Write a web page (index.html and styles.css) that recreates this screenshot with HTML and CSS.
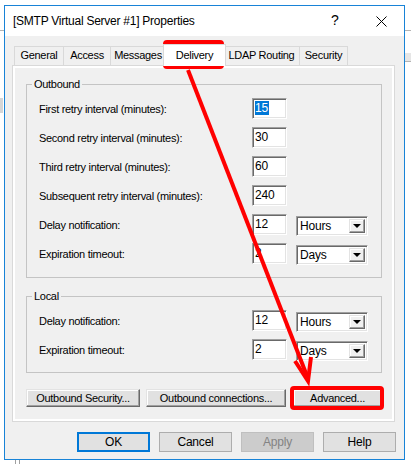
FILE: index.html
```html
<!DOCTYPE html>
<html lang="en">
<head>
  <meta charset="UTF-8">
  <title>[SMTP Virtual Server #1] Properties</title>
  <link rel="stylesheet" href="styles.css">
</head>
<body>
  <div class="window">
    <div class="titlebar">
      <span class="title">[SMTP Virtual Server #1] Properties</span>
      <span class="caption-btn help">?</span>
      <span class="caption-btn">
        <svg width="11" height="11" viewBox="0 0 11 11"><path d="M0.5 0.5L10.5 10.5M10.5 0.5L0.5 10.5" stroke="#000" stroke-width="1"/></svg>
      </span>
    </div>

    <div class="dialog">
      <div class="tabs">
        <div class="tab tab-general">General</div>
        <div class="tab tab-access">Access</div>
        <div class="tab tab-messages">Messages</div>
        <div class="tab tab-delivery selected">Delivery</div>
        <div class="tab tab-ldap">LDAP Routing</div>
        <div class="tab tab-security">Security</div>
      </div>

      <div class="panel">
        <div class="page">
          <fieldset class="group">
            <legend>Outbound</legend>
            <div class="row">
              <span class="label">First retry interval (minutes):</span>
              <span class="edit"><span class="selection">15</span></span>
            </div>
            <div class="row">
              <span class="label">Second retry interval (minutes):</span>
              <span class="edit">30</span>
            </div>
            <div class="row">
              <span class="label">Third retry interval (minutes):</span>
              <span class="edit">60</span>
            </div>
            <div class="row">
              <span class="label">Subsequent retry interval (minutes):</span>
              <span class="edit">240</span>
            </div>
            <div class="row">
              <span class="label">Delay notification:</span>
              <span class="edit">12</span>
              <span class="combo"><span class="combo-text">Hours</span><span class="drop"></span></span>
            </div>
            <div class="row">
              <span class="label">Expiration timeout:</span>
              <span class="edit">2</span>
              <span class="combo"><span class="combo-text">Days</span><span class="drop"></span></span>
            </div>
          </fieldset>

          <fieldset class="group local">
            <legend>Local</legend>
            <div class="row">
              <span class="label">Delay notification:</span>
              <span class="edit">12</span>
              <span class="combo"><span class="combo-text">Hours</span><span class="drop"></span></span>
            </div>
            <div class="row">
              <span class="label">Expiration timeout:</span>
              <span class="edit">2</span>
              <span class="combo"><span class="combo-text">Days</span><span class="drop"></span></span>
            </div>
          </fieldset>

          <div class="page-buttons">
            <button class="classic-btn btn-security">Outbound Security...</button>
            <button class="classic-btn btn-connections">Outbound connections...</button>
            <button class="classic-btn btn-advanced">Advanced...</button>
          </div>
        </div>
      </div>

      <div class="dialog-buttons">
        <button class="btn default">OK</button>
        <button class="btn">Cancel</button>
        <button class="btn disabled">Apply</button>
        <button class="btn">Help</button>
      </div>
    </div>
  </div>

  <svg class="annotations" width="411" height="464" viewBox="0 0 411 464">
    <rect x="165" y="42" width="57" height="25" rx="2" fill="none" stroke="#f00" stroke-width="4"/>
    <rect x="292" y="388" width="90" height="20" rx="2" fill="none" stroke="#f00" stroke-width="4"/>
    <line x1="188" y1="70" x2="307" y2="376" stroke="#f00" stroke-width="4"/>
    <polyline points="295,361 308,381 311,357" fill="none" stroke="#f00" stroke-width="4" stroke-linejoin="miter"/>
  </svg>
</body>
</html>
```

FILE: styles.css
```css
* {
  box-sizing: border-box;
}

body {
  margin: 0;
  padding: 5px 0 0 4px;
  width: 411px;
  height: 464px;
  position: relative;
  overflow: hidden;
  font-family: 'Liberation Sans', Arial, sans-serif;
  font-size: 11px;
  letter-spacing: -0.3px;
  color: #000;
  background:
    linear-gradient(#b4b4b4, #b4b4b4) 0 30px / 100% 1px no-repeat,
    linear-gradient(#b4b4b4, #b4b4b4) right 0 top 61px / 10px 1px no-repeat,
    linear-gradient(#e6e6e6, #e6e6e6) right 0 top 53px / 10px 8px no-repeat,
    linear-gradient(#d6d6d6, #d6d6d6) 0 98px / 3px 15px no-repeat,
    linear-gradient(#a0a0a0, #a0a0a0) 15px 460px / 1px 4px no-repeat,
    linear-gradient(#a0a0a0, #a0a0a0) 19px 460px / 1px 4px no-repeat,
    #fff;
}

.window {
  width: 401px;
  height: 455px;
  border: 1px solid #1883d7;
  background: #f0f0f0;
  display: flex;
  flex-direction: column;
}

/* title bar */
.titlebar {
  height: 30px;
  background: #fff;
  display: flex;
  align-items: center;
  padding-left: 8px;
}

.title {
  flex: 1;
  font-size: 12px;
  letter-spacing: -0.25px;
  padding-bottom: 1px;
}

.caption-btn {
  width: 46px;
  height: 30px;
  display: flex;
  align-items: center;
  justify-content: center;
}

.caption-btn.help {
  font-size: 14px;
  letter-spacing: 0;
  padding-bottom: 2px;
}

/* dialog body */
.dialog {
  flex: 1;
  padding: 8px 9px 7px 7px;
  display: flex;
  flex-direction: column;
}

.tabs {
  display: flex;
  align-items: flex-end;
  height: 21px;
  margin-left: 2px;
}

.tab {
  height: 19px;
  border: 1px solid #d9d9d9;
  border-bottom: none;
  margin-right: -1px;
  text-align: center;
  line-height: 17px;
  background: #f0f0f0;
}

.tab.selected {
  height: 22px;
  margin-bottom: -1px;
  background: #fff;
  position: relative;
  z-index: 1;
  line-height: 20px;
}

.tab-general { width: 50px; }
.tab-access { width: 48px; }
.tab-messages { width: 56px; }
.tab-delivery { width: 63px; margin-left: -2px; margin-right: -3px; }
.tab-ldap { width: 77px; }
.tab-security { width: 49px; }

.panel {
  border: 1px solid #d9d9d9;
  background: #fff;
  padding: 2px;
}

.page {
  background: #f0f0f0;
  padding: 9px 10px 12px 11px;
}

/* group boxes */
.group {
  margin: 0;
  border: 1px solid #c4c4c4;
  padding: 7px 12px 13px 12px;
  display: flex;
  flex-direction: column;
  gap: 8px;
}

.group legend {
  padding: 0 2px;
  margin-left: -7px;
  line-height: 14px;
}

.group.local {
  margin-top: 11px;
  padding-bottom: 12px;
}

.row {
  display: flex;
  align-items: center;
  height: 21px;
}

.label {
  width: 213px;
  flex: none;
}

.edit {
  width: 35px;
  height: 21px;
  background: #fff;
  border: 1px solid;
  border-color: #a0a0a0 #fff #fff #a0a0a0;
  box-shadow: inset 1px 1px #696969, inset -1px -1px #e3e3e3;
  padding: 2px 0 0 2px;
  line-height: 14px;
  font-size: 12px;
  letter-spacing: -0.2px;
}

.selection {
  background: #0078d7;
  color: #fff;
  padding: 0 1px 0 0;
  display: inline-block;
}

.combo {
  width: 72px;
  height: 20px;
  margin-left: 9px;
  align-self: flex-end;
  margin-bottom: -1px;
  background: #fff;
  border: 1px solid;
  border-color: #a0a0a0 #fff #fff #a0a0a0;
  box-shadow: inset 1px 1px #696969, inset -1px -1px #e3e3e3;
  padding: 2px 2px 2px 3px;
  display: flex;
  align-items: center;
  font-size: 12px;
  letter-spacing: -0.2px;
}

.combo-text {
  flex: 1;
}

.drop {
  width: 16px;
  height: 100%;
  background: #f0f0f0;
  border: 1px solid;
  border-color: #e3e3e3 #696969 #696969 #e3e3e3;
  box-shadow: inset -1px -1px #a0a0a0, inset 1px 1px #fff;
  display: flex;
  align-items: center;
  justify-content: center;
}

.drop::after {
  content: '';
  border-left: 4px solid transparent;
  border-right: 4px solid transparent;
  border-top: 4px solid #000;
}

/* page buttons */
.page-buttons {
  display: flex;
  margin-top: 16px;
}

.classic-btn {
  height: 18px;
  padding: 0;
  font-family: inherit;
  font-size: 11px;
  letter-spacing: -0.3px;
  color: #000;
  background: #e1e1e1;
  border: 1px solid;
  border-color: #e3e3e3 #696969 #696969 #e3e3e3;
  box-shadow: inset -1px -1px #a0a0a0, inset 1px 1px #fff;
}

.btn-security { width: 114px; }
.btn-connections { width: 140px; margin-left: 6px; }
.btn-advanced { width: 89px; margin-left: 7px; }

/* dialog buttons */
.dialog-buttons {
  display: flex;
  justify-content: flex-end;
  gap: 9px;
  margin-top: 10px;
  margin-right: -1px;
}

.btn {
  width: 73px;
  height: 20px;
  padding: 0;
  font-family: inherit;
  font-size: 12px;
  letter-spacing: -0.2px;
  color: #000;
  background: #e1e1e1;
  border: 1px solid #adadad;
}

.btn.default {
  border: 2px solid #0078d7;
}

.btn.disabled {
  background: #ccc;
  border-color: #bfbfbf;
  color: #838383;
}

.annotations {
  position: absolute;
  left: 0;
  top: 0;
  pointer-events: none;
}
```
